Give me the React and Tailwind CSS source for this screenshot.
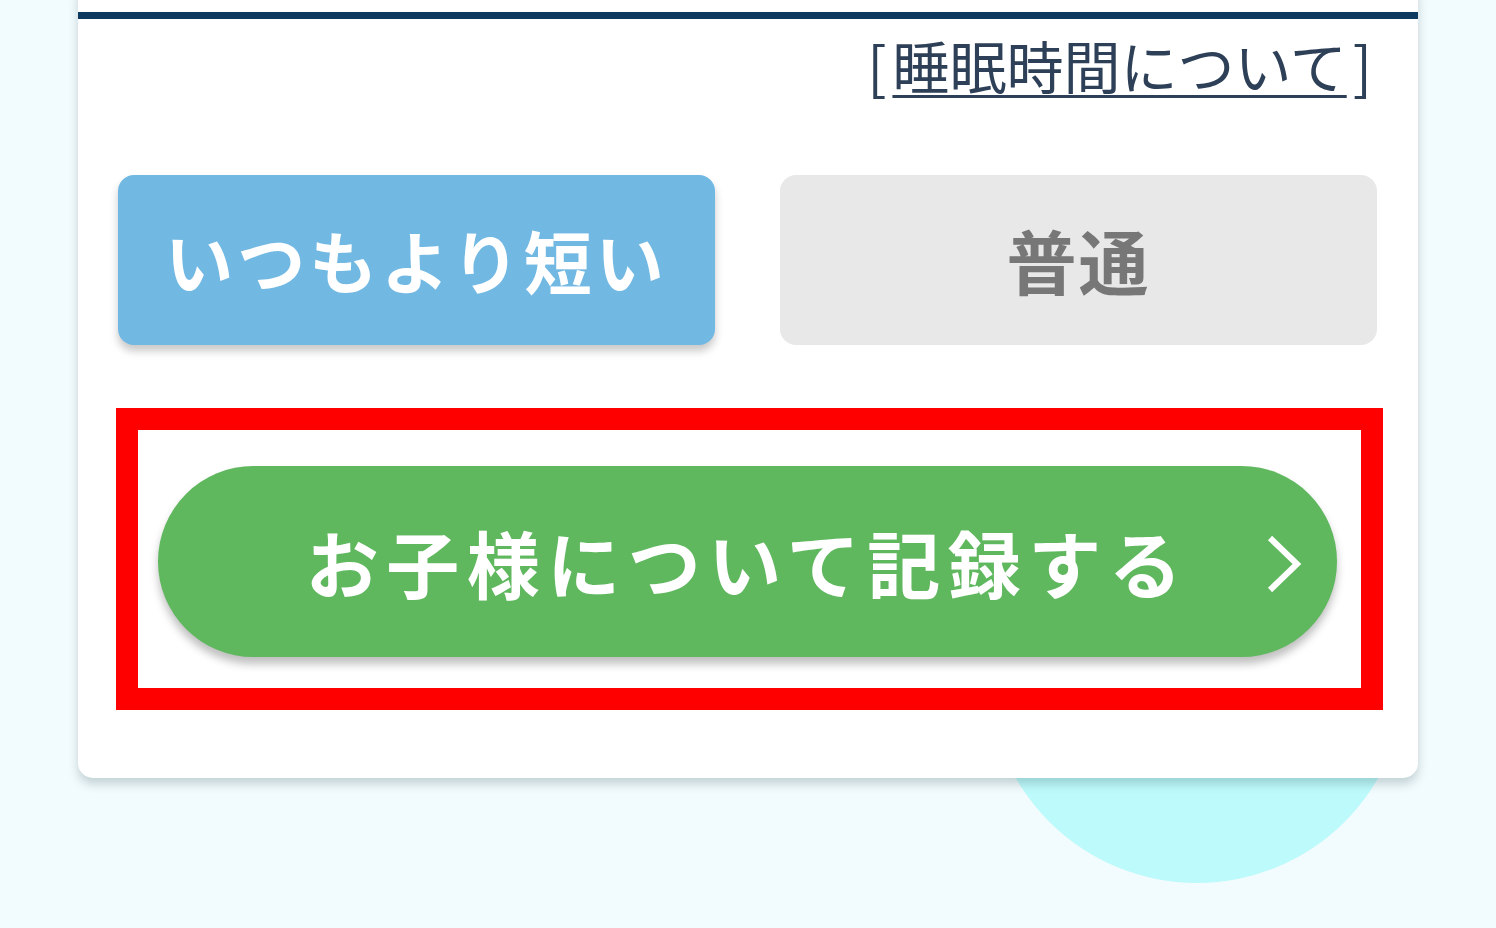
export default function App() {
  const font = { fontFamily: '"Noto Sans CJK JP", "Noto Sans", sans-serif' };
  return (
    <div
      className="relative w-[1496px] h-[928px] overflow-hidden bg-[#f2fbfd]"
      style={font}
    >
      {/* decorative circle behind card */}
      <div className="absolute left-[988px] top-[465px] w-[418px] h-[418px] rounded-full bg-[#bdfafb]" />

      <div className="relative ml-[78px] -mt-[20px] w-[1340px] rounded-[15px] bg-white pt-[32px] pb-[68px] shadow-[0_6px_10px_rgba(60,90,100,0.25)]">
        <div className="h-[7px] bg-[#0d3a5e]" />

        <div className="flex justify-end pr-[46px] mt-[5px] h-[82px] items-start">
          <a className="flex items-center gap-[6px] text-[57px] leading-[80px] text-[#2e4057] cursor-pointer">
            <span>[</span>
            <span className="underline decoration-[3px] underline-offset-[6px]">睡眠時間について</span>
            <span>]</span>
          </a>
        </div>

        <div className="flex gap-[65px] pl-[40px] pr-[41px] mt-[69px]">
          <div className="flex h-[170px] w-[597px] items-center justify-center rounded-[16px] bg-[#71b8e3] shadow-[0_6px_8px_rgba(0,0,0,0.22)]">
            <span className="text-[68px] font-bold leading-none tracking-[4px] text-white">いつもより短い</span>
          </div>
          <div className="flex h-[170px] w-[597px] items-center justify-center rounded-[16px] bg-[#e8e8e8]">
            <span className="text-[70px] font-bold leading-none tracking-[2px] text-[#777777]">普通</span>
          </div>
        </div>

        <div className="ml-[38px] mt-[63px] w-[1267px] border-[22px] border-[#ff0000] pt-[36px] pb-[31px] pl-[20px] pr-[3px]">
          <div className="relative flex h-[191px] w-[1179px] items-center justify-center rounded-full bg-[#5fb75e] shadow-[0_7px_8px_rgba(0,0,0,0.25)]">
            <span className="text-[73px] font-bold leading-none tracking-[7.5px] text-white">お子様について記録する</span>
            <svg
              className="absolute right-[33px] top-[68px]"
              width="40"
              height="60"
              viewBox="0 0 40 60"
              fill="none"
            >
              <path d="M6 4 L33 30 L6 56" stroke="white" strokeWidth="6" strokeLinecap="butt" strokeLinejoin="miter" />
            </svg>
          </div>
        </div>
      </div>
    </div>
  );
}
